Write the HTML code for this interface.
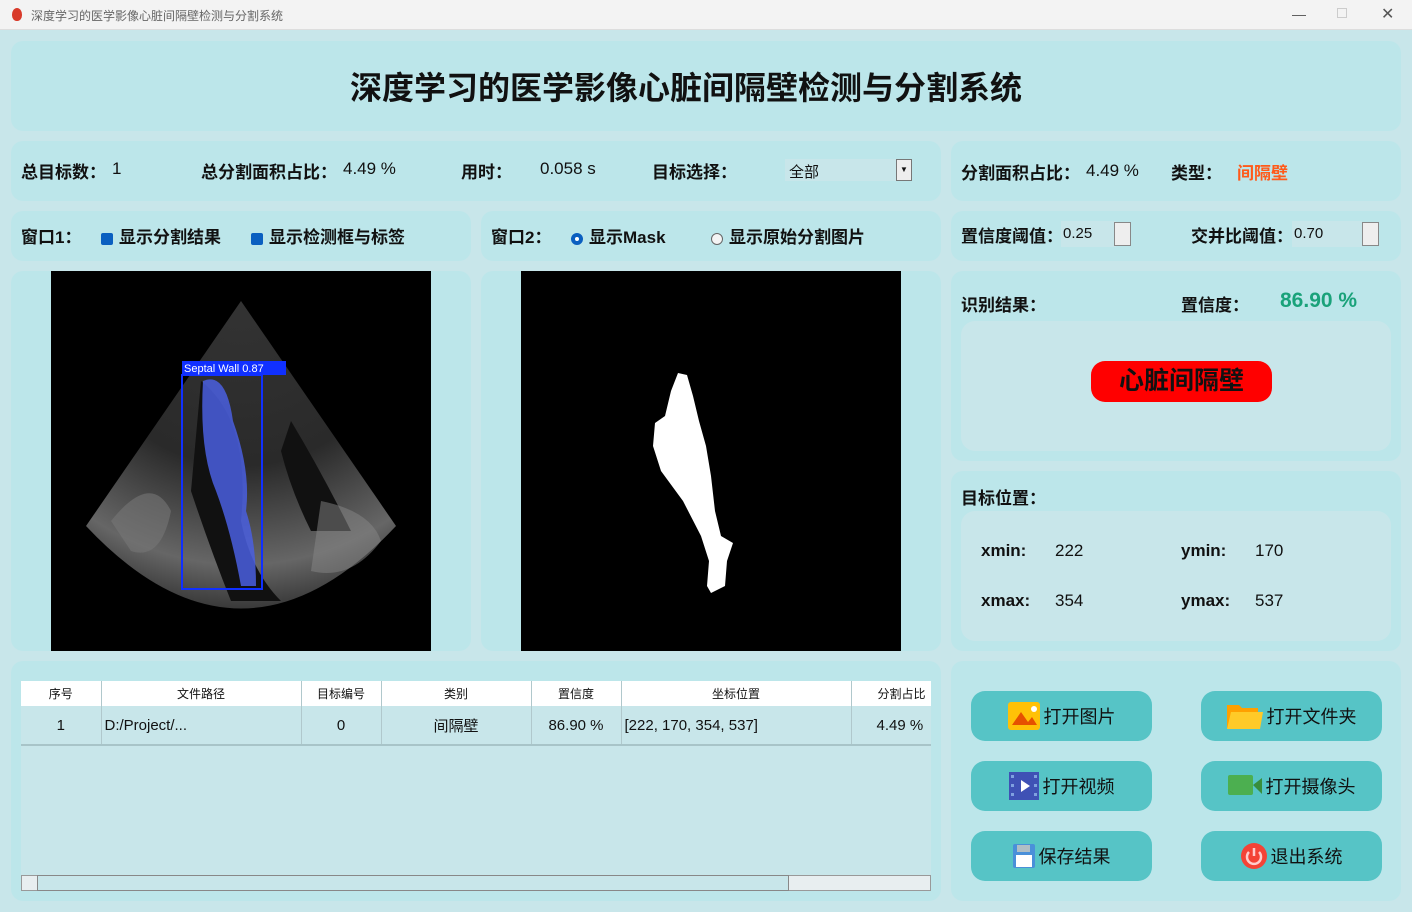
<!DOCTYPE html>
<html><head><meta charset="utf-8"><style>
*{margin:0;padding:0;box-sizing:border-box}
body{width:1412px;height:912px;position:relative;overflow:hidden;background:#c8e6ea;font-family:"Liberation Sans","Noto Sans CJK SC",sans-serif;color:#111}
.a{position:absolute}
.p{position:absolute;background:#bce6ea;border-radius:12px}
.b{font-weight:bold;font-size:17px}
.t{font-size:17px}
.btn{position:absolute;width:181px;height:50px;background:#56c4c6;border-radius:14px;font-size:18px;display:flex;align-items:center;justify-content:center;gap:4px}
.cb{display:inline-block;width:12px;height:12px;background:#0a5fc0;border-radius:2px;vertical-align:middle;margin-right:6px;position:relative}
.spin{position:absolute;width:17px;height:24px;border:1px solid #888;background:#eee}
th,td{font-weight:normal;border-right:1px solid #b0c8cc}
</style></head><body>
<div class="a" style="left:0;top:0;width:1412px;height:30px;background:#f3f3f3;border-bottom:1px solid #ddd"></div>
<div class="a" style="left:12px;top:8px;width:10px;height:13px;background:#d83a2a;border-radius:50% 50% 45% 45%"></div>
<div class="a" style="left:31px;top:7px;font-size:12px;color:#666">深度学习的医学影像心脏间隔壁检测与分割系统</div>
<div class="a" style="left:1292px;top:6px;font-size:14px;color:#555">—</div>
<div class="a" style="left:1337px;top:8px;width:10px;height:10px;border:1px solid #ccc"></div>
<div class="a" style="left:1381px;top:4px;font-size:16px;color:#555">✕</div>

<div class="p" style="left:11px;top:41px;width:1390px;height:90px"></div>
<div class="a" style="left:0;width:1372px;top:63px;text-align:center;font-size:32px;font-weight:bold">深度学习的医学影像心脏间隔壁检测与分割系统</div>

<div class="p" style="left:11px;top:141px;width:930px;height:60px"></div>
<div class="a b" style="left:21px;top:158px">总目标数：</div><div class="a t" style="left:112px;top:159px">1</div>
<div class="a b" style="left:201px;top:158px">总分割面积占比：</div><div class="a t" style="left:343px;top:159px">4.49 %</div>
<div class="a b" style="left:461px;top:158px">用时：</div><div class="a t" style="left:540px;top:159px">0.058 s</div>
<div class="a b" style="left:652px;top:158px">目标选择：</div>
<div class="a" style="left:785px;top:159px;width:127px;height:22px;background:#c8e6ea;font-size:15px;padding:2px 4px">全部</div>
<div class="a" style="left:896px;top:159px;width:16px;height:22px;border:1px solid #777;background:#eee;font-size:8px;text-align:center;line-height:20px">▼</div>

<div class="p" style="left:951px;top:141px;width:450px;height:60px"></div>
<div class="a b" style="left:961px;top:159px">分割面积占比：</div><div class="a t" style="left:1086px;top:161px">4.49 %</div>
<div class="a b" style="left:1171px;top:159px">类型：</div><div class="a b" style="left:1237px;top:159px;color:#ff5a1a">间隔壁</div>

<div class="p" style="left:11px;top:211px;width:460px;height:50px"></div>
<div class="a b" style="left:21px;top:223px">窗口1：</div>
<div class="a b" style="left:101px;top:223px"><span class="cb"></span>显示分割结果</div>
<div class="a b" style="left:251px;top:223px"><span class="cb"></span>显示检测框与标签</div>
<div class="p" style="left:481px;top:211px;width:460px;height:50px"></div>
<div class="a b" style="left:491px;top:223px">窗口2：</div>
<div class="a b" style="left:571px;top:223px"><span class="cb" style="border-radius:50%;background:#fff;border:4px solid #0a5fc0"></span>显示Mask</div>
<div class="a b" style="left:711px;top:223px"><span class="cb" style="border-radius:50%;background:#f4f4f4;border:1px solid #666"></span>显示原始分割图片</div>
<div class="p" style="left:951px;top:211px;width:450px;height:50px"></div>
<div class="a b" style="left:961px;top:222px">置信度阈值：</div>
<div class="a" style="left:1061px;top:221px;width:55px;height:26px;background:#c8e6ea;font-size:15px;padding:4px 2px">0.25</div>
<div class="spin" style="left:1114px;top:222px"></div>
<div class="a b" style="left:1191px;top:222px">交并比阈值：</div>
<div class="a" style="left:1292px;top:221px;width:70px;height:26px;background:#c8e6ea;font-size:15px;padding:4px 2px">0.70</div>
<div class="spin" style="left:1362px;top:222px"></div>

<div class="p" style="left:11px;top:271px;width:460px;height:380px"></div>
<div class="a" style="left:51px;top:271px;width:380px;height:380px;background:#000;overflow:hidden">
<svg width="380" height="380">
<defs><radialGradient id="g" cx="190" cy="30" r="330" gradientUnits="userSpaceOnUse"><stop offset="0" stop-color="#333"/><stop offset="0.5" stop-color="#2a2a2a"/><stop offset="0.8" stop-color="#666"/><stop offset="1" stop-color="#222"/></radialGradient></defs>
<path d="M190 30 L35 255 Q190 420 345 255 Z" fill="url(#g)"/>
<path d="M150 110 Q200 150 190 250 Q200 300 230 330 L180 330 Q160 280 140 220 Z" fill="#111"/>
<path d="M240 150 Q270 200 300 260 L260 260 Q240 220 230 180Z" fill="#111"/>
<path d="M60 250 Q100 200 120 240 Q110 290 80 280Z" fill="#777" opacity="0.6"/>
<path d="M270 230 Q320 240 330 270 Q300 310 260 300Z" fill="#888" opacity="0.5"/>
<path d="M152 110 Q175 100 182 150 Q200 200 195 240 Q205 270 205 315 L190 315 Q180 260 165 220 Q148 180 152 110Z" fill="#4a5fe0" opacity="0.85"/>
<rect x="131" y="104" width="80" height="214" fill="none" stroke="#1030ff" stroke-width="2"/>
<rect x="131" y="90" width="104" height="14" fill="#1030ff"/>
<text x="133" y="101" font-size="11" fill="#fff" font-family="Liberation Sans">Septal  Wall  0.87</text>
</svg></div>
<div class="p" style="left:481px;top:271px;width:460px;height:380px"></div>
<div class="a" style="left:521px;top:271px;width:380px;height:380px;background:#000">
<svg width="380" height="380"><path d="M157 102 L166 104 L172 125 L178 150 L185 175 L190 205 L194 240 L200 265 L212 272 L206 290 L204 315 L190 322 L186 315 L188 290 L180 265 L162 230 L140 200 L132 175 L134 152 L144 145 L150 120 Z" fill="#fff"/></svg></div>

<div class="p" style="left:951px;top:271px;width:450px;height:190px"></div>
<div class="a b" style="left:961px;top:291px">识别结果：</div>
<div class="a b" style="left:1181px;top:291px">置信度：</div>
<div class="a" style="left:1280px;top:289px;font-size:21px;font-weight:bold;color:#1aa27a">86.90 %</div>
<div class="a" style="left:961px;top:321px;width:430px;height:130px;background:#c8e6ea;border-radius:14px"></div>
<div class="a" style="left:1091px;top:361px;width:181px;height:41px;background:#f00;border-radius:14px;font-size:25px;font-weight:bold;text-align:center;line-height:41px">心脏间隔壁</div>

<div class="p" style="left:951px;top:471px;width:450px;height:180px"></div>
<div class="a b" style="left:961px;top:484px">目标位置：</div>
<div class="a" style="left:961px;top:511px;width:430px;height:130px;background:#c8e6ea;border-radius:14px"></div>
<div class="a b" style="left:981px;top:541px">xmin:</div><div class="a t" style="left:1055px;top:541px">222</div>
<div class="a b" style="left:1181px;top:541px">ymin:</div><div class="a t" style="left:1255px;top:541px">170</div>
<div class="a b" style="left:981px;top:591px">xmax:</div><div class="a t" style="left:1055px;top:591px">354</div>
<div class="a b" style="left:1181px;top:591px">ymax:</div><div class="a t" style="left:1255px;top:591px">537</div>

<div class="p" style="left:11px;top:661px;width:930px;height:240px"></div>
<div class="a" style="left:21px;top:681px;width:910px;height:210px;background:#c8e6ea;overflow:hidden">
<table style="border-collapse:collapse;width:980px;font-size:12px;table-layout:fixed">
<tr style="background:#fff;height:25px"><th style="width:80px">序号</th><th style="width:200px">文件路径</th><th style="width:80px">目标编号</th><th style="width:150px">类别</th><th style="width:90px">置信度</th><th style="width:230px">坐标位置</th><th style="width:150px;text-align:left;padding-left:26px">分割占比</th></tr>
<tr style="height:39px;font-size:15px;text-align:center;border-bottom:2px solid #a8c4c8"><td>1</td><td style="text-align:left;padding-left:3px">D:/Project/...</td><td>0</td><td>间隔壁</td><td>86.90 %</td><td style="text-align:left;padding-left:3px">[222, 170, 354, 537]</td><td style="text-align:left;padding-left:25px">4.49 %</td></tr>
</table></div>
<div class="a" style="left:21px;top:875px;width:910px;height:16px;background:#e8eef0;border:1px solid #999"></div>
<div class="a" style="left:37px;top:875px;width:752px;height:16px;background:#c8e6ea;border:1px solid #888"></div>

<div class="p" style="left:951px;top:661px;width:450px;height:240px"></div>
<div class="btn" style="left:971px;top:691px"><svg width="32" height="28"><rect width="32" height="28" rx="3" fill="#ffc107"/><path d="M4 23 L13 10 L20 20 L24 15 L29 23Z" fill="#e65100"/><circle cx="26" cy="7" r="3" fill="#fff"/></svg>打开图片</div>
<div class="btn" style="left:1201px;top:691px"><svg width="36" height="28"><path d="M0 3 h12 l3 3 h16 v20 h-31z" fill="#ffa000"/><path d="M4 10 h32 l-3 17 h-33z" fill="#ffca28"/></svg>打开文件夹</div>
<div class="btn" style="left:971px;top:761px"><svg width="30" height="28"><rect width="30" height="28" fill="#3f51b5"/><path d="M12 8 L21 14 L12 20Z" fill="#fff"/><g fill="#7fa0e0"><rect x="2" y="3" width="3" height="3"/><rect x="2" y="12" width="3" height="3"/><rect x="2" y="21" width="3" height="3"/><rect x="25" y="3" width="3" height="3"/><rect x="25" y="12" width="3" height="3"/><rect x="25" y="21" width="3" height="3"/></g></svg>打开视频</div>
<div class="btn" style="left:1201px;top:761px"><svg width="34" height="22"><rect width="25" height="20" rx="2" fill="#4caf50"/><path d="M25 10 L34 3 V19Z" fill="#388e3c"/></svg>打开摄像头</div>
<div class="btn" style="left:971px;top:831px"><svg width="22" height="24"><rect width="22" height="24" rx="2" fill="#4a90d9"/><rect x="4" y="1" width="13" height="7" fill="#b0bec5"/><rect x="3" y="11" width="16" height="12" fill="#fff"/></svg>保存结果</div>
<div class="btn" style="left:1201px;top:831px"><svg width="26" height="26"><circle cx="13" cy="13" r="13" fill="#f44336"/><path d="M8 9 A7 7 0 1 0 18 9" stroke="#fcc" stroke-width="2.5" fill="none"/><path d="M13 5 V13" stroke="#fcc" stroke-width="2.5"/></svg>退出系统</div>
</body></html>
